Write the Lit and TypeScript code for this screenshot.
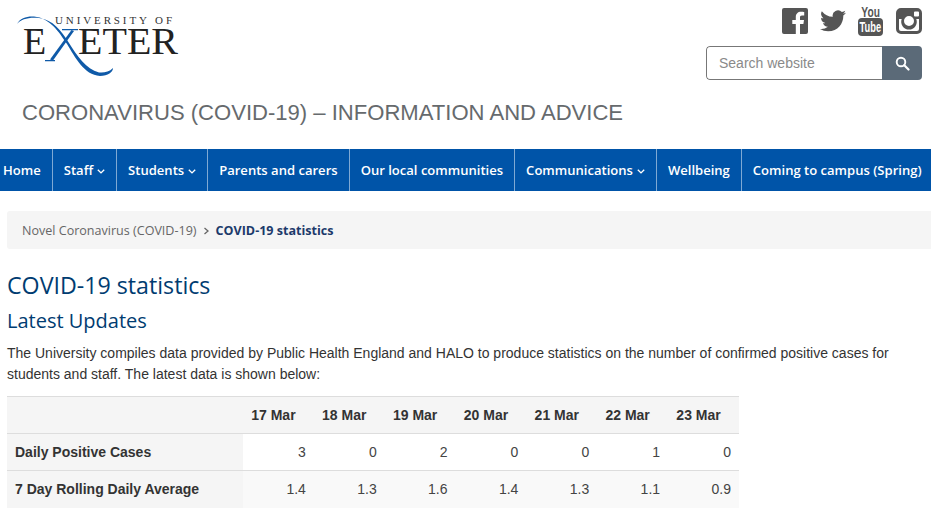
import { LitElement, html, css, svg } from "lit";
import { customElement } from "lit/decorators.js";

const chev = html`<svg class="chev" viewBox="0 0 8 5" width="8" height="5"><path d="M.8.8 4 3.900 7.200.8" fill="none" stroke="#fff" stroke-width="1.400"/></svg>`;

const logo = svg`<svg class="logo" width="170" height="78" viewBox="0 0 170 78">
  <text x="38" y="24" font-family="Liberation Serif" font-size="11" textLength="117" fill="#333">UNIVERSITY OF</text>
  <text x="6" y="54" font-family="Liberation Serif" font-size="38" fill="#222">E</text>
  <text x="61" y="54" font-family="Liberation Serif" font-size="38" fill="#222" textLength="100" lengthAdjust="spacingAndGlyphs">ETER</text>
  <path d="M33 59.500 54.500 30 57 31 36 60.500Z" fill="#0f5aa8"/>
  <path d="M45 29H61V30.200H45ZM28 60H38V61.200H28Z" fill="#0f5aa8"/>
  <path d="M0 24C3 18 10 16 17 16.500C33 18 42 32 50 44C58 57 67 75 83 76C91 76 96 72 96 68C92 72 87 73 82 72.500C69 69 60 56 52 43C44 30 36 20 22 18C12 17 4 19 0 24Z" fill="#0f5aa8"/>
</svg>`;

const icons = html`
  <svg width="26" height="26" viewBox="0 0 26 26"><path fill="#555" d="M2 0H24A2 2 0 0 1 26 2V24A2 2 0 0 1 24 26H18V16H21.400L22 12H18V9.500C18 8.300 18.400 7.500 20 7.500H22.200V4C21.700 3.900 20.400 3.800 19 3.800C15.900 3.800 13.800 5.700 13.800 9.100V12H10.300V16H13.800V26H2A2 2 0 0 1 0 24V2A2 2 0 0 1 2 0Z"/></svg>
  <svg width="26" height="22" viewBox="0 0 24 20"><path fill="#555" d="M24 2.400a9.800 9.800 0 0 1-2.800.8 4.900 4.900 0 0 0 2.100-2.700 9.800 9.800 0 0 1-3.100 1.200A4.900 4.900 0 0 0 11.800 6.100 13.900 13.900 0 0 1 1.700.9a4.900 4.900 0 0 0 1.500 6.600A4.900 4.900 0 0 1 1 6.900v.1a4.900 4.900 0 0 0 3.900 4.800 4.900 4.900 0 0 1-2.200.1 4.900 4.900 0 0 0 4.600 3.400A9.900 9.900 0 0 1 0 17.300 13.900 13.900 0 0 0 7.500 19.500c9.100 0 14-7.500 14-14v-.6A10 10 0 0 0 24 2.400Z"/></svg>
  <div class="yt"><span class="you">You</span><div class="tube"><span>Tube</span></div></div>
  <svg class="ig" width="26" height="26" viewBox="0 0 26 26"><path fill="#555" fill-rule="evenodd" d="M5 0H21A5 5 0 0 1 26 5V21A5 5 0 0 1 21 26H5A5 5 0 0 1 0 21V5A5 5 0 0 1 5 0ZM3 11V21A2 2 0 0 0 5 23H21A2 2 0 0 0 23 21V11H20.300A7.800 7.800 0 1 1 5.700 11ZM13 8A5 5 0 1 0 13 18 5 5 0 0 0 13 8ZM19 3.500A1 1 0 0 0 18 4.500V7.500A1 1 0 0 0 19 8.500H22A1 1 0 0 0 23 7.500V4.500A1 1 0 0 0 22 3.500Z"/></svg>
`;

const nav: [string, boolean][] = [
  ["Home", false], ["Staff", true], ["Students", true], ["Parents and carers", false],
  ["Our local communities", false], ["Communications", true], ["Wellbeing", false], ["Coming to campus (Spring)", false],
];
const days = ["17 Mar", "18 Mar", "19 Mar", "20 Mar", "21 Mar", "22 Mar", "23 Mar"];
const rows: [string, string[]][] = [
  ["Daily Positive Cases", ["3", "0", "2", "0", "0", "1", "0"]],
  ["7 Day Rolling Daily Average", ["1.4", "1.3", "1.6", "1.4", "1.3", "1.1", "0.9"]],
];

@customElement("app-root")
export class AppRoot extends LitElement {
  static styles = css`
    :host { display: block; width: 931px; height: 512px; overflow: hidden; background: #fff; font-family: "Liberation Sans", Arial, sans-serif; color: #333; }
    header { height: 149px; display: flex; justify-content: space-between; box-sizing: border-box; }
    .brand { padding: 0 0 0 17px; display: flex; flex-direction: column; }
    .logo { display: block; }
    .site { margin: 21px 0 0 5px; font-size: 22.070px; line-height: 28px; font-weight: 400; color: #666a6d; white-space: nowrap; }
    .tools { display: flex; flex-direction: column; align-items: flex-end; padding: 6px 9px 0 0; }
    .social { display: flex; align-items: center; gap: 12px; height: 30px; }
    .social svg { display: block; }
    .ig { margin-left: 1px; }
    .yt { width: 25px; height: 30px; display: flex; flex-direction: column; align-items: center; font-weight: 700; color: #555; }
    .you { font-size: 15px; line-height: 12px; height: 12px; transform: scaleX(.68); }
    .tube { background: #555; color: #fff; border-radius: 4px; font-size: 15px; line-height: 18px; height: 18px; width: 25px; display: flex; justify-content: center; }
    .tube span { transform: scaleX(.62); }
    .search { display: flex; width: 216px; height: 34px; margin-top: 10px; border-radius: 4px; overflow: hidden; box-sizing: border-box; }
    .input { flex: 1; box-sizing: border-box; border: 1px solid #777; border-right: 0; border-radius: 4px 0 0 4px; padding-left: 12px; font-size: 14px; line-height: 33px; color: #8a8a8a; }
    .btn { width: 40px; background: #5b6a78; display: flex; align-items: center; justify-content: center; }
    nav { height: 42px; background: #0054a8; display: flex; font-family: "Open Sans", sans-serif; font-weight: 600; font-size: 13.050px; color: #fff; white-space: nowrap; }
    .item { display: flex; align-items: center; gap: 4px; padding: 0 11px; border-left: 1px solid #7fa9d4; }
    .item:first-child { padding-left: 3px; border-left: 0; }
    .chev { margin-top: 2px; }
    .crumbs { margin: 20px 0 0 7px; height: 38px; background: #f5f5f5; border-radius: 3px 0 0 3px; padding-left: 15px; display: flex; align-items: center; font-family: "Open Sans", sans-serif; font-size: 12.550px; color: #666; gap: 6px; }
    .crumbs b { color: #1c3a6b; font-weight: 700; }
    .crumbs svg { margin-top: 1px; }
    main { padding: 0 7px; }
    h1 { margin: 20px 0 0; font: 400 23.200px/32px "Open Sans", sans-serif; color: #003c71; }
    h2 { margin: 6px 0 0; font: 400 20px/28px "Open Sans", sans-serif; color: #003c71; }
    p { margin: 8px 0 0; font-size: 14px; line-height: 21px; color: #333; width: 900px; }
    table { margin-top: 11px; border-collapse: collapse; width: 732px; table-layout: fixed; font-size: 14px; border-top: 1px solid #ddd; }
    col.first { width: 236px; }
    tr { height: 37px; }
    th, td { padding: 0 8px; box-sizing: border-box; border-top: 1px solid #ddd; color: #444; }
    thead tr:first-child th { border-top: 0; height: 36px; }
    thead th { background: #f5f5f5; text-align: center; font-weight: 700; color: #333; padding: 0 10px 0 0; }
    tbody th { background: #f5f5f5; text-align: left; font-weight: 700; color: #333; }
    td { text-align: right; }
    tbody tr:nth-child(2) td { background: #f9f9f9; }
  `;

  render() {
    return html`
      <header>
        <div class="brand">${logo}<div class="site">CORONAVIRUS (COVID-19) – INFORMATION AND ADVICE</div></div>
        <div class="tools">
          <div class="social">${icons}</div>
          <div class="search">
            <div class="input">Search website</div>
            <div class="btn"><svg width="15" height="15" viewBox="0 0 15 15"><circle cx="6" cy="6" r="4.300" fill="none" stroke="#fff" stroke-width="1.900"/><path d="M9.300 9.300 13.500 13.500" stroke="#fff" stroke-width="2.200" stroke-linecap="round"/></svg></div>
          </div>
        </div>
      </header>
      <nav>${nav.map(([t, c]) => html`<div class="item">${t}${c ? chev : ""}</div>`)}</nav>
      <div class="crumbs">Novel Coronavirus (COVID-19)
        <svg width="7" height="8" viewBox="0 0 7 8"><path d="M1.500 1 5 4 1.500 7" fill="none" stroke="#666" stroke-width="1.300"/></svg>
        <b>COVID-19 statistics</b></div>
      <main>
        <h1>COVID-19 statistics</h1>
        <h2>Latest Updates</h2>
        <p>The University compiles data provided by Public Health England and HALO to produce statistics on the number of confirmed positive cases for students and staff. The latest data is shown below:</p>
        <table>
          <colgroup><col class="first" />${days.map(() => html`<col />`)}</colgroup>
          <thead><tr><th></th>${days.map((d) => html`<th>${d}</th>`)}</tr></thead>
          <tbody>${rows.map(([l, v]) => html`<tr><th>${l}</th>${v.map((x) => html`<td>${x}</td>`)}</tr>`)}</tbody>
        </table>
      </main>
    `;
  }
}
